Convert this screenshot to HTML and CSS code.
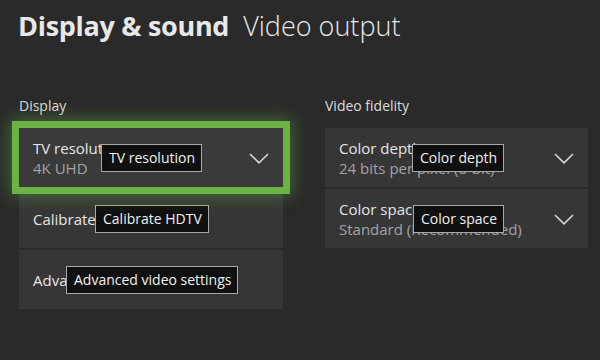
FILE: index.html
```html
<!DOCTYPE html>
<html lang="en">
<head>
<meta charset="utf-8">
<title>Display &amp; sound - Video output</title>
<link rel="stylesheet" href="styles.css">
</head>
<body>
<header class="title">
  <span class="title-main">Display &amp; sound</span>
  <span class="title-sub">Video output</span>
</header>
<main class="columns">
  <section class="col col-left">
    <h2 class="col-label">Display</h2>
    <div class="list">
      <div class="card card-focused">
        <div class="card-text">
          <div class="card-primary">TV resolution</div>
          <div class="card-secondary">4K UHD</div>
        </div>
        <svg class="chevron" width="20" height="11" viewBox="0 0 20 11"><polyline points="1,1 10,9.8 19,1" fill="none" stroke="#d6d6d6" stroke-width="1.6"/></svg>
        <div class="tip tip-tv">TV resolution</div>
      </div>
      <div class="card">
        <div class="card-text">
          <div class="card-primary">Calibrate HDTV</div>
        </div>
        <div class="tip tip-cal">Calibrate HDTV</div>
      </div>
      <div class="card">
        <div class="card-text">
          <div class="card-primary">Advanced video settings</div>
        </div>
        <div class="tip tip-adv">Advanced video settings</div>
      </div>
    </div>
  </section>
  <section class="col col-right">
    <h2 class="col-label">Video fidelity</h2>
    <div class="list">
      <div class="card">
        <div class="card-text">
          <div class="card-primary">Color depth</div>
          <div class="card-secondary">24 bits per pixel (8-bit)</div>
        </div>
        <svg class="chevron" width="20" height="11" viewBox="0 0 20 11"><polyline points="1,1 10,9.8 19,1" fill="none" stroke="#d6d6d6" stroke-width="1.6"/></svg>
        <div class="tip tip-depth">Color depth</div>
      </div>
      <div class="card">
        <div class="card-text">
          <div class="card-primary">Color space</div>
          <div class="card-secondary">Standard (Recommended)</div>
        </div>
        <svg class="chevron" width="20" height="11" viewBox="0 0 20 11"><polyline points="1,1 10,9.8 19,1" fill="none" stroke="#d6d6d6" stroke-width="1.6"/></svg>
        <div class="tip tip-space">Color space</div>
      </div>
    </div>
  </section>
</main>
</body>
</html>
```

FILE: styles.css
```css
* { box-sizing: border-box; }
html, body { margin: 0; padding: 0; }
body {
  width: 600px;
  height: 360px;
  overflow: hidden;
  background: #2a2a2a;
  color: #e8e8e8;
  font-family: "Open Sans", "Noto Sans", sans-serif;
}
.title {
  display: flex;
  align-items: baseline;
  gap: 14px;
  padding: 7px 0 0 18px;
  height: 62px;
  line-height: 38px;
}
.title-main {
  font-size: 27px;
  font-weight: 700;
  letter-spacing: -0.3px;
}
.title-sub {
  font-size: 27px;
  font-weight: 300;
  letter-spacing: 0;
}
.columns {
  display: flex;
  gap: 42px;
  padding: 34px 0 0 19px;
}
.col-left { width: 264px; }
.col-right { width: 263px; }
.col-label {
  margin: 0 0 12px 0;
  font-size: 14px;
  font-weight: 400;
  line-height: 20px;
  color: #dcdcdc;
}
.list {
  display: flex;
  flex-direction: column;
  gap: 2px;
}
.card {
  position: relative;
  height: 59px;
  background: #363636;
  display: flex;
  align-items: center;
  justify-content: space-between;
  padding: 1px 14px 0 14px;
}
.card-focused {
  z-index: 2;
  background: #3a3a3a;
  box-shadow: 0 0 0 7px #6ab344, 0 0 16px 9px rgba(106, 179, 68, 0.45);
}
.card-text {
  font-size: 15px;
  line-height: 20px;
  white-space: nowrap;
}
.card-primary { color: #e6e6e6; }
.card-secondary { color: #a3a3a3; }
.chevron { flex: none; display: block; }
.tip {
  position: absolute;
  top: 16px;
  height: 28px;
  padding: 3px 6px 0 7px;
  background: #101010;
  border: 1px solid #a8a8a8;
  color: #f0f0f0;
  font-size: 14px;
  line-height: 20px;
  white-space: nowrap;
}
.tip-tv { left: 82px; }
.tip-cal { left: 76px; }
.tip-adv { left: 47px; }
.tip-depth { left: 87px; }
.tip-space { left: 88px; }
```
